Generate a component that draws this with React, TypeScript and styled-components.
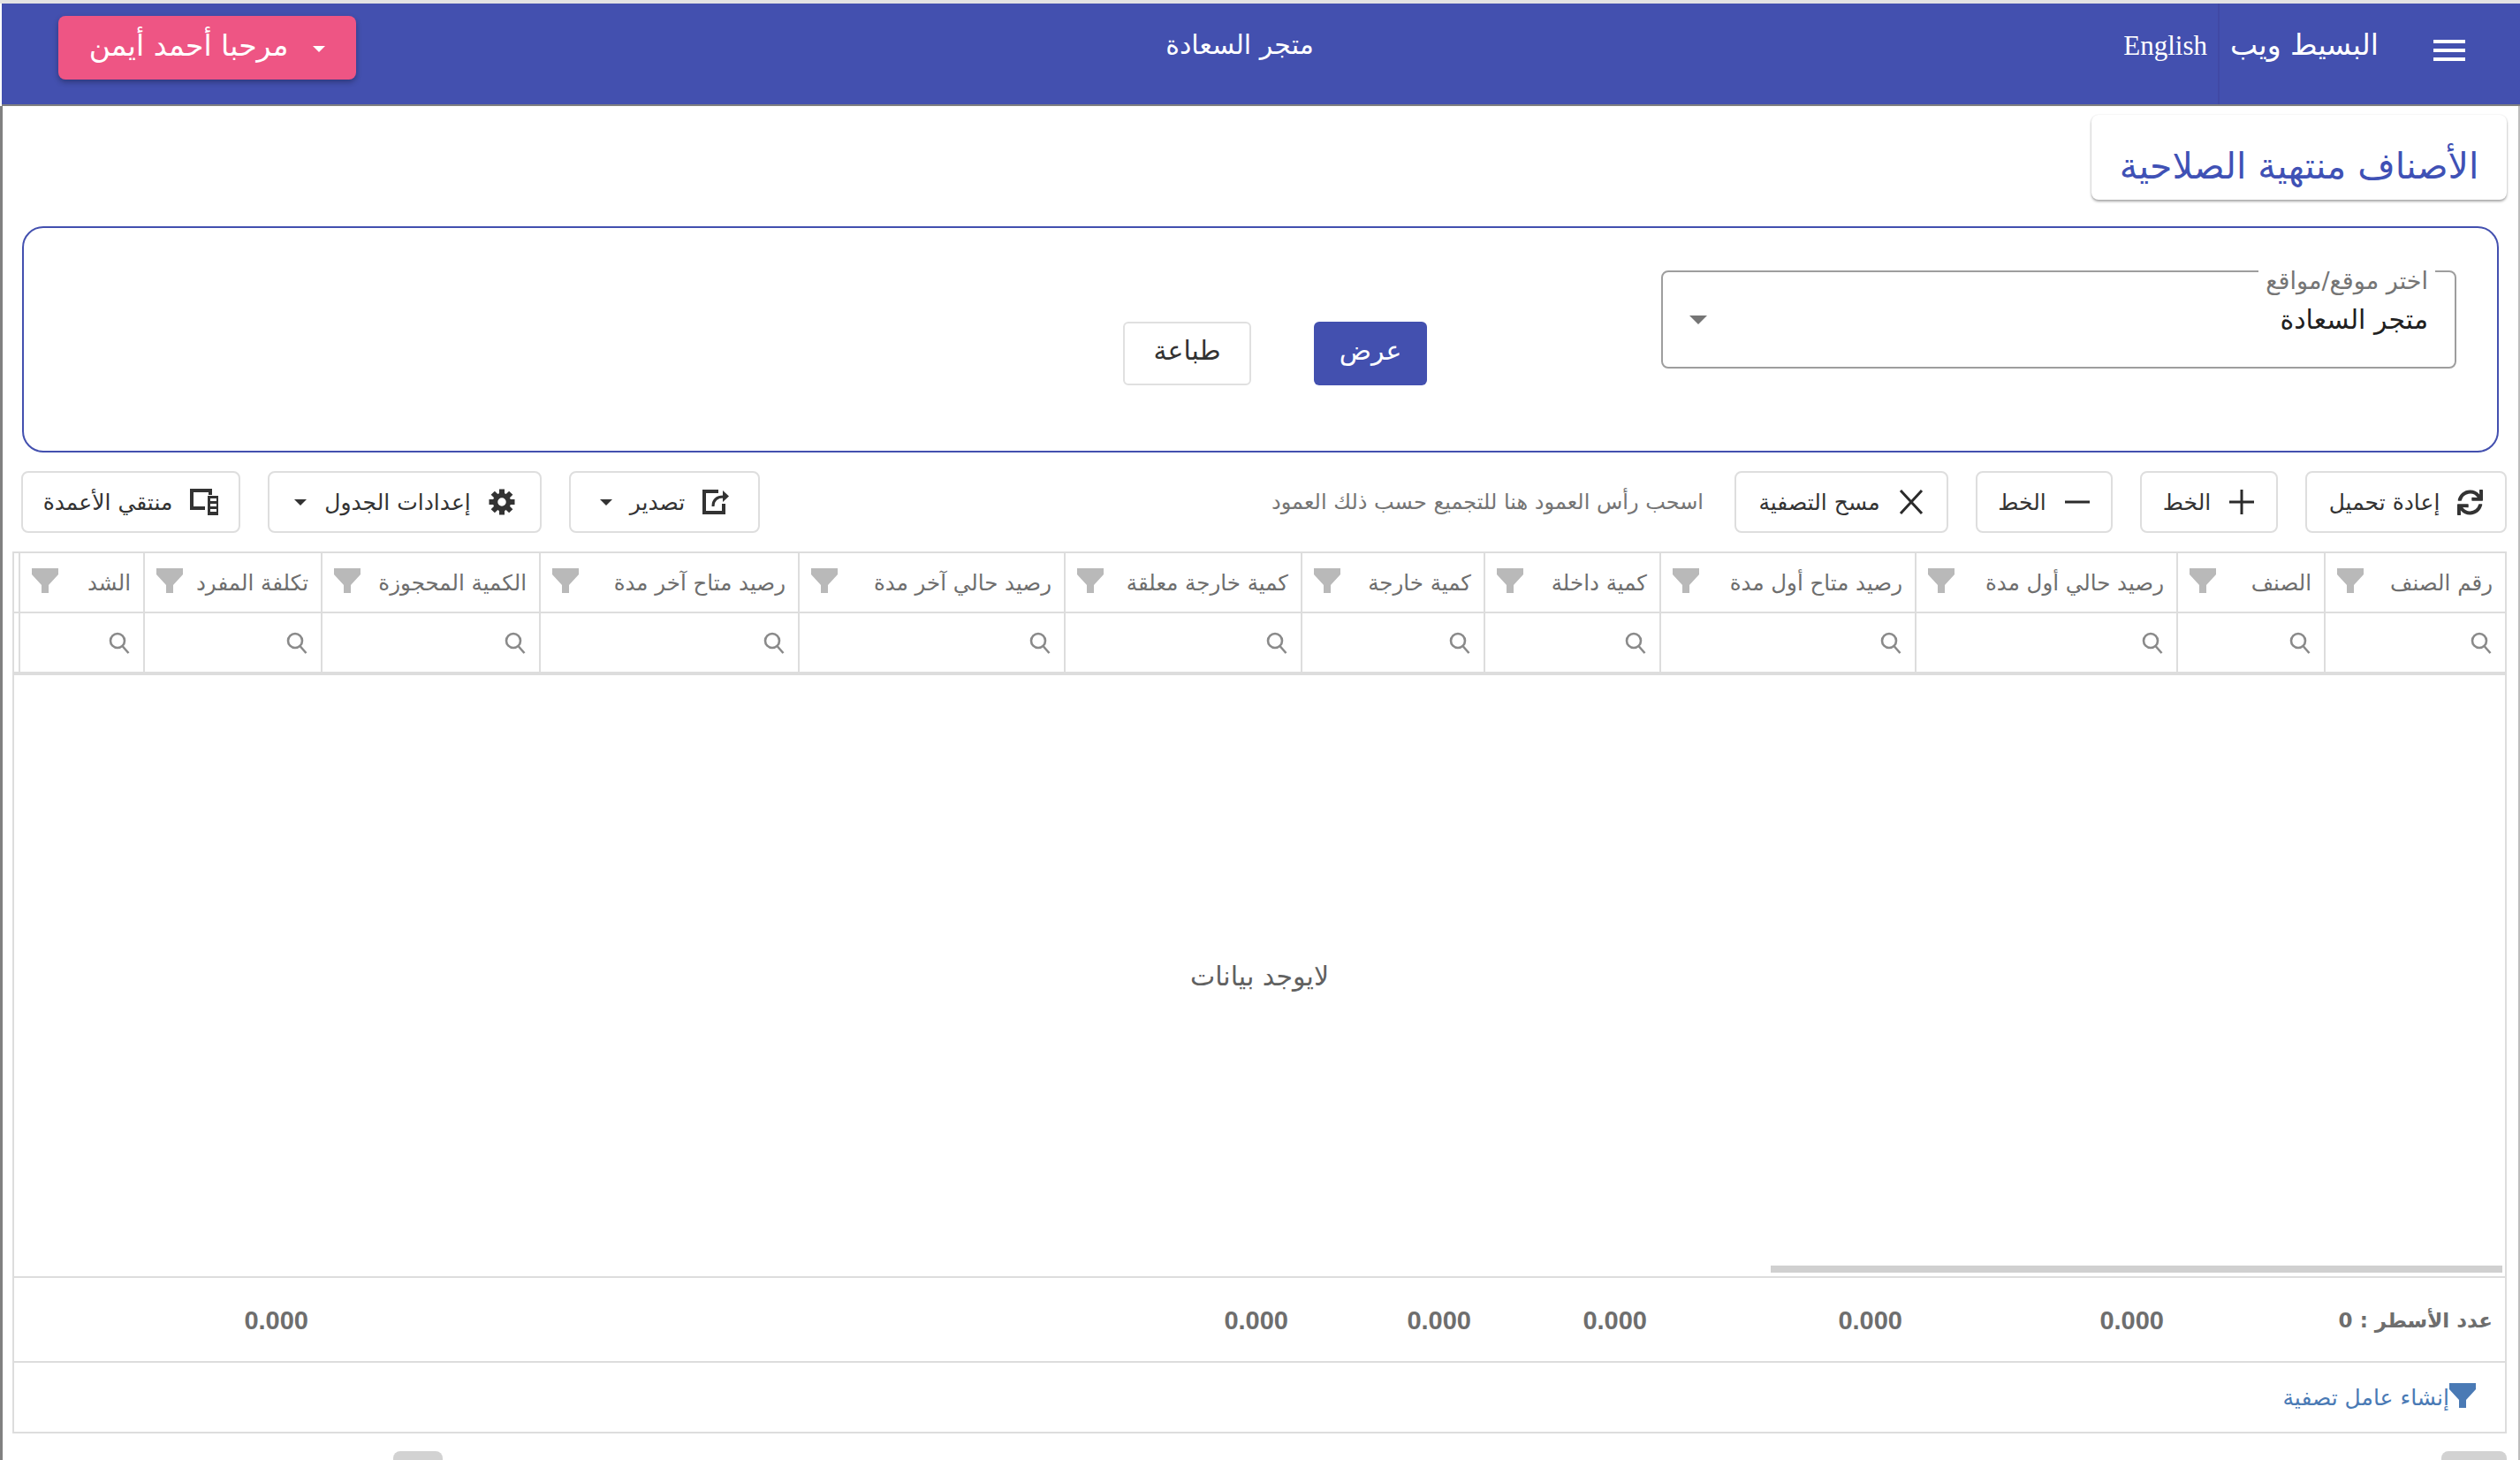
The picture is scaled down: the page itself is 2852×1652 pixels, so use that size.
import React from "react";
import styled, { createGlobalStyle } from "styled-components";
import { FaSync } from "react-icons/fa";

const COLUMNS = "205px 167px 296px 289px 199px 207px 268px 301px 293px 247px 201px 141px 1fr";

const headers = [
  "رقم الصنف",
  "الصنف",
  "رصيد حالي أول مدة",
  "رصيد متاح أول مدة",
  "كمية داخلة",
  "كمية خارجة",
  "كمية خارجة معلقة",
  "رصيد حالي آخر مدة",
  "رصيد متاح آخر مدة",
  "الكمية المحجوزة",
  "تكلفة المفرد",
  "الشد",
];

const totals = ["", "", "0.000", "0.000", "0.000", "0.000", "0.000", "", "", "", "0.000", ""];

const GlobalStyle = createGlobalStyle`
  html, body {
    margin: 0;
    padding: 0;
    background: #fff;
    overflow: hidden;
  }
  * {
    box-sizing: border-box;
  }
`;

const Page = styled.div`
  direction: rtl;
  width: 2852px;
  height: 1652px;
  overflow: hidden;
  border-top: 4px solid #e3e3e3;
  font-family: "DejaVu Sans", sans-serif;
`;

const Header = styled.header`
  height: 116px;
  margin-left: 2px;
  background: #4350af;
  border-bottom: 2px solid #808080;
  color: #fff;
  display: flex;
  align-items: stretch;
  justify-content: space-between;
`;

const HeaderStart = styled.div`
  display: flex;
  align-items: stretch;
  width: 449px;
  flex-shrink: 0;
`;

const Burger = styled.button`
  width: 98px;
  padding: 0 62px 0 0;
  border: 0;
  background: none;
  color: #fff;
  display: flex;
  align-items: center;
  justify-content: flex-start;
  flex-shrink: 0;
  margin-top: -8px;
`;

const SiteName = styled.div`
  width: 244px;
  display: flex;
  align-items: center;
  padding: 0 62px 22px 0;
  font-size: 33px;
  white-space: nowrap;
  border-left: 2px solid #4049a5;
  flex-shrink: 0;
`;

const Lang = styled.a`
  margin-right: 12px;
  display: flex;
  align-items: center;
  padding-bottom: 18px;
  font-family: "Liberation Serif", serif;
  font-size: 31px;
  color: #fff;
`;

const StoreTitle = styled.div`
  align-self: center;
  margin-bottom: 22px;
  font-size: 30px;
  white-space: nowrap;
`;

const HeaderEnd = styled.div`
  width: 401px;
  display: flex;
  justify-content: flex-end;
  padding-left: 64px;
  flex-shrink: 0;
`;

const UserButton = styled.button`
  margin-top: 14px;
  width: 337px;
  height: 72px;
  border: 0;
  border-radius: 8px;
  background: #ee5584;
  color: #fff;
  font: inherit;
  font-size: 33px;
  display: flex;
  align-items: center;
  justify-content: center;
  gap: 28px;
  padding: 0 0 6px;
  box-shadow: 0 3px 6px rgba(0, 0, 0, 0.3);
  white-space: nowrap;
  span {
    margin-top: 8px;
  }
`;

const Main = styled.main`
  height: 1532px;
  border-left: 3px solid #808080;
  border-right: 2px solid #bdbdbd;
  padding: 10px 13px 0 11px;
`;

const TitleCard = styled.div`
  width: 470px;
  height: 96px;
  padding: 34px 0 0;
  background: #fff;
  border-radius: 8px;
  box-shadow: 0 2px 3px rgba(0, 0, 0, 0.35), 0 0 2px rgba(0, 0, 0, 0.08);
  color: #3f51b5;
  font-size: 41px;
  line-height: 48px;
  text-align: center;
  white-space: nowrap;
`;

const FilterPanel = styled.section`
  margin: 30px 9px 0 11px;
  height: 256px;
  padding: 48px 46px 0 0;
  border: 2px solid #4350af;
  border-radius: 24px;
  display: flex;
  align-items: flex-start;
`;

const SiteField = styled.div`
  position: relative;
  width: 900px;
  height: 111px;
  border: 2px solid #9e9e9e;
  border-radius: 8px;
  display: flex;
  align-items: center;
  justify-content: space-between;
  padding: 0 30px 0 30px;
`;

const FieldLabel = styled.span`
  position: absolute;
  top: -7px;
  right: 22px;
  padding: 0 8px;
  background: #fff;
  color: #757575;
  font-size: 27px;
  line-height: 34px;
`;

const FieldValue = styled.span`
  color: #212121;
  font-size: 30px;
`;

const Actions = styled.div`
  margin: 58px 265px 0 0;
  display: flex;
  gap: 71px;
`;

const ActionButton = styled.button<{ $primary?: boolean }>`
  width: ${(p) => (p.$primary ? 128 : 145)}px;
  height: 72px;
  border-radius: 6px;
  border: ${(p) => (p.$primary ? "0" : "2px solid #e0e0e0")};
  background: ${(p) => (p.$primary ? "#4350af" : "#fff")};
  color: ${(p) => (p.$primary ? "#fff" : "#333")};
  font: inherit;
  font-size: 30px;
  padding: 0 0 8px;
`;

const Toolbar = styled.div`
  margin: 21px 0 0 10px;
  height: 70px;
  display: flex;
  align-items: stretch;
  justify-content: space-between;
`;

const ToolGroup = styled.div`
  display: flex;
  align-items: stretch;
  gap: 31px;
`;

const ToolButton = styled.button<{ $width: number }>`
  width: ${(p) => p.$width}px;
  border: 2px solid #dedede;
  border-radius: 8px;
  background: #fff;
  color: #333;
  font-family: "DejaVu Sans", sans-serif;
  font-size: 25px;
  display: flex;
  align-items: center;
  justify-content: center;
  gap: 20px;
  padding: 0;
  white-space: nowrap;
  svg {
    flex-shrink: 0;
  }
`;

const Caret = styled.span<{ $color?: string; $size?: number }>`
  display: inline-block;
  width: 0;
  height: 0;
  flex-shrink: 0;
  border-left: ${(p) => p.$size ?? 7}px solid transparent;
  border-right: ${(p) => p.$size ?? 7}px solid transparent;
  border-top: ${(p) => p.$size ?? 7}px solid ${(p) => p.$color ?? "#333"};
`;

const GroupHint = styled.span`
  align-self: center;
  margin-right: 4px;
  color: #757575;
  font-size: 24px;
  white-space: nowrap;
`;

const Grid = styled.div`
  margin-top: 21px;
  height: 998px;
  border: 2px solid #ddd;
  display: flex;
  flex-direction: column;
`;

const HeadRow = styled.div`
  display: grid;
  grid-template-columns: ${COLUMNS};
  height: 68px;
  border-bottom: 2px solid #ddd;
`;

const SearchRow = styled.div`
  display: grid;
  grid-template-columns: ${COLUMNS};
  height: 70px;
  border-bottom: 4px solid #ddd;
`;

const HeadCell = styled.div`
  border-left: 2px solid #ddd;
  padding: 0 14px 0 13px;
  display: flex;
  align-items: center;
  justify-content: space-between;
  color: #6e6e6e;
  font-size: 24.5px;
  white-space: nowrap;
  overflow: hidden;
  &:last-child {
    border-left: 0;
  }
`;

const SearchCell = styled.div`
  border-left: 2px solid #ddd;
  padding-right: 14px;
  display: flex;
  align-items: center;
  &:last-child {
    border-left: 0;
  }
`;

const GridBody = styled.div`
  position: relative;
  flex: 1;
  display: flex;
  align-items: center;
  justify-content: center;
  color: #616161;
  font-size: 30px;
  border-bottom: 2px solid #ddd;
`;

const HScroll = styled.div`
  position: absolute;
  bottom: 4px;
  right: 3px;
  width: 828px;
  height: 8px;
  background: #d0d0d0;
`;

const TotalsRow = styled.div`
  position: relative;
  display: grid;
  grid-template-columns: ${COLUMNS};
  height: 96px;
  border-bottom: 2px solid #ddd;
`;

const TotalCell = styled.div`
  padding: 2px 14px 0;
  display: flex;
  align-items: center;
  color: #6e6e6e;
  font-family: "Liberation Sans", "DejaVu Sans", sans-serif;
  font-size: 29px;
  font-weight: 700;
  white-space: nowrap;
`;

const RowCount = styled(TotalCell)`
  font-family: "DejaVu Sans", sans-serif;
  font-size: 23px;
`;

const FilterBar = styled.div`
  height: 78px;
  flex-shrink: 0;
  display: flex;
  align-items: center;
  padding-right: 33px;
  color: #4a7ab5;
  font-size: 25px;
  white-space: nowrap;
`;

const BottomThumb = styled.div<{ $width: number }>`
  width: ${(p) => p.$width}px;
  height: 20px;
  background: #d2d2d2;
  border-radius: 8px 8px 0 0;
`;

const BottomScrolls = styled.div`
  margin-top: 20px;
  display: flex;
  justify-content: space-between;
  padding: 0 0 0 431px;
`;

const FunnelIcon = ({ color = "#b9b9b9" }: { color?: string }) => (
  <svg width="30" height="28" viewBox="0 0 30 28" style={{ flexShrink: 0, marginBottom: 4 }}>
    <path d="M0 0H30V7L19 19V28H11V19L0 7Z" fill={color} />
  </svg>
);

const SearchIcon = () => (
  <svg width="25" height="25" viewBox="0 0 25 25" fill="none" stroke="#8a8a8a" strokeWidth="2.6">
    <circle cx="10" cy="10" r="8" />
    <path d="M15.5 16L22.5 24" />
  </svg>
);

const PlusIcon = () => (
  <svg width="30" height="30" viewBox="0 0 30 30" stroke="#2b2b2b" strokeWidth="3">
    <path d="M15 1V29M1 15H29" />
  </svg>
);

const MinusIcon = () => (
  <svg width="30" height="30" viewBox="0 0 30 30" stroke="#2b2b2b" strokeWidth="3">
    <path d="M1 15H29" />
  </svg>
);

const CrossIcon = () => (
  <svg width="30" height="30" viewBox="0 0 30 30" stroke="#2b2b2b" strokeWidth="3">
    <path d="M3 2L27 28M27 2L3 28" />
  </svg>
);

const ExportIcon = () => (
  <svg width="30" height="30" viewBox="0 0 30 30" fill="none" stroke="#333" strokeWidth="4">
    <path d="M18 3H2V27H24V17" />
    <path d="M12 20C12 12 17 9 24 9" strokeWidth="3" />
    <path d="M23 2L30 8.500L23 15Z" fill="#333" stroke="none" />
  </svg>
);

const GearIcon = () => (
  <svg width="30" height="30" viewBox="0 0 30 30">
    {[0, 45, 90, 135, 180, 225, 270, 315].map((a) => (
      <rect key={a} x="12" y="0.500" width="6" height="6" fill="#333" transform={`rotate(${a} 15 15)`} />
    ))}
    <circle cx="15" cy="15" r="7.500" fill="none" stroke="#333" strokeWidth="5.500" />
  </svg>
);

const ColumnsIcon = () => (
  <svg width="32" height="30" viewBox="0 0 32 30" fill="#333">
    <path d="M0 0H25V7H21V4H4V20H17V24H0Z" />
    <path
      d="M20 8H32V30H20ZM23 11V14H30V11ZM23 17V20H30V17ZM23 23V26H30V23Z"
      fillRule="evenodd"
    />
  </svg>
);

const MenuIcon = () => (
  <svg width="36" height="24" viewBox="0 0 36 24" fill="#fff">
    <rect width="36" height="4" />
    <rect y="10" width="36" height="4" />
    <rect y="20" width="36" height="4" />
  </svg>
);

const App = () => {
  return (
    <Page>
      <GlobalStyle />
      <Header>
        <HeaderStart>
          <Burger>
            <MenuIcon />
          </Burger>
          <SiteName>البسيط ويب</SiteName>
          <Lang>English</Lang>
        </HeaderStart>
        <StoreTitle>متجر السعادة</StoreTitle>
        <HeaderEnd>
          <UserButton>
            <Caret $color="#fff" />
            مرحبا أحمد أيمن
          </UserButton>
        </HeaderEnd>
      </Header>
      <Main>
        <TitleCard>الأصناف منتهية الصلاحية</TitleCard>
        <FilterPanel>
          <SiteField>
            <FieldLabel>اختر موقع/مواقع</FieldLabel>
            <FieldValue>متجر السعادة</FieldValue>
            <Caret $color="#757575" $size={10} />
          </SiteField>
          <Actions>
            <ActionButton $primary>عرض</ActionButton>
            <ActionButton>طباعة</ActionButton>
          </Actions>
        </FilterPanel>
        <Toolbar>
          <ToolGroup>
            <ToolButton $width={228}>
              <FaSync size={29} color="#333" />
              إعادة تحميل
            </ToolButton>
            <ToolButton $width={156}>
              <PlusIcon />
              الخط
            </ToolButton>
            <ToolButton $width={155}>
              <MinusIcon />
              الخط
            </ToolButton>
            <ToolButton $width={242}>
              <CrossIcon />
              مسح التصفية
            </ToolButton>
            <GroupHint>اسحب رأس العمود هنا للتجميع حسب ذلك العمود</GroupHint>
          </ToolGroup>
          <ToolGroup>
            <ToolButton $width={216}>
              <ExportIcon />
              تصدير
              <Caret />
            </ToolButton>
            <ToolButton $width={310}>
              <GearIcon />
              إعدادات الجدول
              <Caret />
            </ToolButton>
            <ToolButton $width={248}>
              <ColumnsIcon />
              منتقي الأعمدة
            </ToolButton>
          </ToolGroup>
        </Toolbar>
        <Grid>
          <HeadRow>
            {headers.map((h) => (
              <HeadCell key={h}>
                {h}
                <FunnelIcon />
              </HeadCell>
            ))}
            <HeadCell />
          </HeadRow>
          <SearchRow>
            {headers.map((h) => (
              <SearchCell key={h}>
                <SearchIcon />
              </SearchCell>
            ))}
            <SearchCell />
          </SearchRow>
          <GridBody>
            لايوجد بيانات
            <HScroll />
          </GridBody>
          <TotalsRow>
            {totals.map((t, i) =>
              i === 0 ? (
                <RowCount key={i}>عدد الأسطر : 0</RowCount>
              ) : (
                <TotalCell key={i}>{t}</TotalCell>
              )
            )}
          </TotalsRow>
          <FilterBar>
            <FunnelIcon color="#4a7ab5" />
            إنشاء عامل تصفية
          </FilterBar>
        </Grid>
        <BottomScrolls>
          <BottomThumb $width={74} />
          <BottomThumb $width={56} />
        </BottomScrolls>
      </Main>
    </Page>
  );
};

export default App;
